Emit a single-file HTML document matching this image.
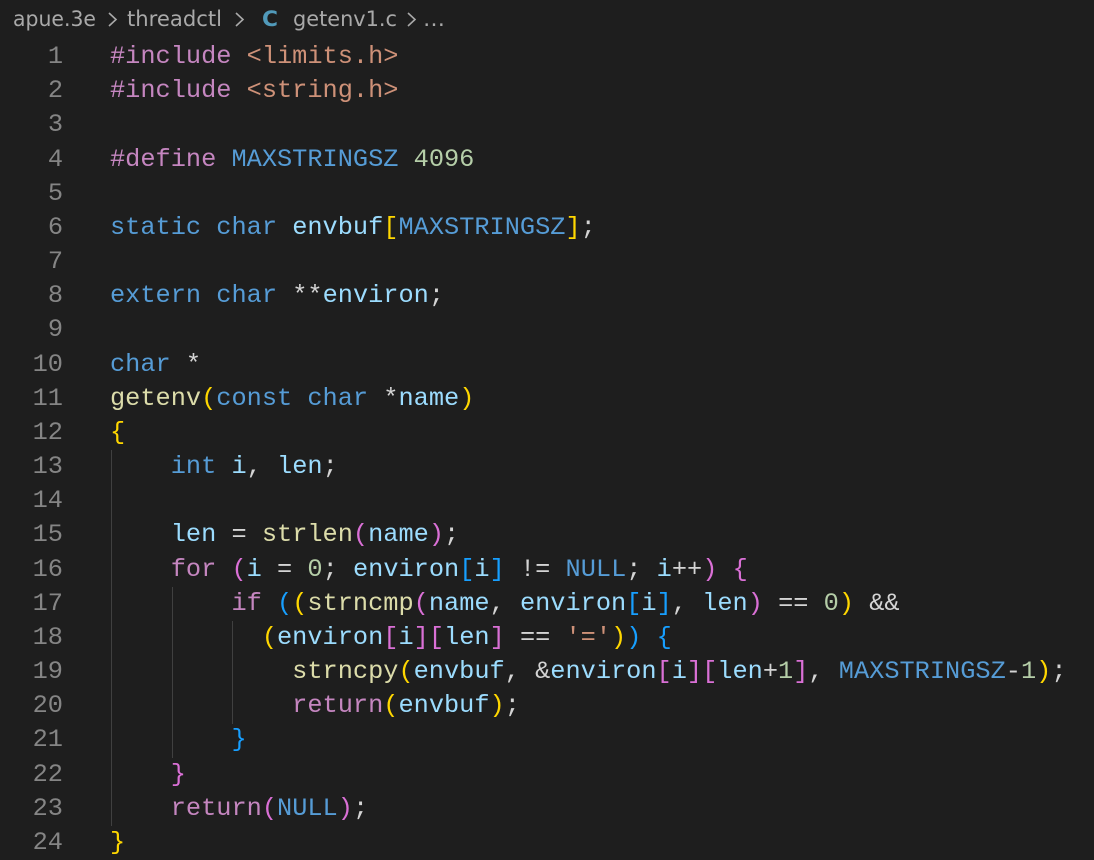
<!DOCTYPE html>
<html><head><meta charset="utf-8"><style>
body{margin:0;width:1094px;height:860px;background:#1e1e1e;overflow:hidden;position:relative;font-family:"Liberation Mono",monospace;}
.bc{position:absolute;left:0;top:0}
.ln{position:absolute;left:0;width:63px;text-align:right;color:#858585;font-size:25.3px;line-height:34.17px}
.code{position:absolute;left:110px;top:40px;font-size:25.3px;line-height:34.17px;color:#9cdcfe;white-space:pre}
.g{position:absolute;width:1px;background:#404040}
.k{color:#569cd6}.p{color:#c586c0}.s{color:#ce9178}.n{color:#b5cea8}.f{color:#dcdcaa}.w{color:#d4d4d4}
.y{color:#ffd700}.o{color:#da70d6}.b{color:#179fff}
</style></head><body>
<svg class="bc" width="460" height="36" font-family="DejaVu Sans, Liberation Sans, sans-serif" font-size="21" fill="#a9a9a9">
<text x="13" y="26" textLength="83" lengthAdjust="spacingAndGlyphs">apue.3e</text>
<path d="M109 13 L116 19.5 L109 26" stroke="#a9a9a9" stroke-width="1.6" fill="none"/>
<text x="127" y="26" textLength="95" lengthAdjust="spacingAndGlyphs">threadctl</text>
<path d="M236 13 L243 19.5 L236 26" stroke="#a9a9a9" stroke-width="1.6" fill="none"/>
<text x="262" y="26" font-weight="bold" fill="#519aba" textLength="16" lengthAdjust="spacingAndGlyphs">C</text>
<text x="293" y="26" textLength="104" lengthAdjust="spacingAndGlyphs">getenv1.c</text>
<path d="M408 13 L415 19.5 L408 26" stroke="#a9a9a9" stroke-width="1.6" fill="none"/>
<text x="423" y="26" textLength="22" lengthAdjust="spacingAndGlyphs">…</text>
</svg>
<div class="ln" style="top:40px">1<br>2<br>3<br>4<br>5<br>6<br>7<br>8<br>9<br>10<br>11<br>12<br>13<br>14<br>15<br>16<br>17<br>18<br>19<br>20<br>21<br>22<br>23<br>24</div>
<div class="g" style="left:111px;top:450px;height:376px"></div>
<div class="g" style="left:172px;top:587px;height:171px"></div>
<div class="g" style="left:232px;top:621px;height:103px"></div>
<div class="code"><span class="p">#include</span> <span class="s">&lt;limits.h&gt;</span>
<span class="p">#include</span> <span class="s">&lt;string.h&gt;</span>

<span class="p">#define</span> <span class="k">MAXSTRINGSZ</span> <span class="n">4096</span>

<span class="k">static</span> <span class="k">char</span> envbuf<span class="y">[</span><span class="k">MAXSTRINGSZ</span><span class="y">]</span><span class="w">;</span>

<span class="k">extern</span> <span class="k">char</span> <span class="w">**</span>environ<span class="w">;</span>

<span class="k">char</span> <span class="w">*</span>
<span class="f">getenv</span><span class="y">(</span><span class="k">const</span> <span class="k">char</span> <span class="w">*</span>name<span class="y">)</span>
<span class="y">{</span>
    <span class="k">int</span> i<span class="w">,</span> len<span class="w">;</span>

    len <span class="w">=</span> <span class="f">strlen</span><span class="o">(</span>name<span class="o">)</span><span class="w">;</span>
    <span class="p">for</span> <span class="o">(</span>i <span class="w">=</span> <span class="n">0</span><span class="w">;</span> environ<span class="b">[</span>i<span class="b">]</span> <span class="w">!=</span> <span class="k">NULL</span><span class="w">;</span> i<span class="w">++</span><span class="o">)</span> <span class="o">{</span>
        <span class="p">if</span> <span class="b">(</span><span class="y">(</span><span class="f">strncmp</span><span class="o">(</span>name<span class="w">,</span> environ<span class="b">[</span>i<span class="b">]</span><span class="w">,</span> len<span class="o">)</span> <span class="w">==</span> <span class="n">0</span><span class="y">)</span> <span class="w">&amp;&amp;</span>
          <span class="y">(</span>environ<span class="o">[</span>i<span class="o">][</span>len<span class="o">]</span> <span class="w">==</span> <span class="s">'='</span><span class="y">)</span><span class="b">)</span> <span class="b">{</span>
            <span class="f">strncpy</span><span class="y">(</span>envbuf<span class="w">,</span> <span class="w">&amp;</span>environ<span class="o">[</span>i<span class="o">][</span>len<span class="w">+</span><span class="n">1</span><span class="o">]</span><span class="w">,</span> <span class="k">MAXSTRINGSZ</span><span class="w">-</span><span class="n">1</span><span class="y">)</span><span class="w">;</span>
            <span class="p">return</span><span class="y">(</span>envbuf<span class="y">)</span><span class="w">;</span>
        <span class="b">}</span>
    <span class="o">}</span>
    <span class="p">return</span><span class="o">(</span><span class="k">NULL</span><span class="o">)</span><span class="w">;</span>
<span class="y">}</span></div>
</body></html>
